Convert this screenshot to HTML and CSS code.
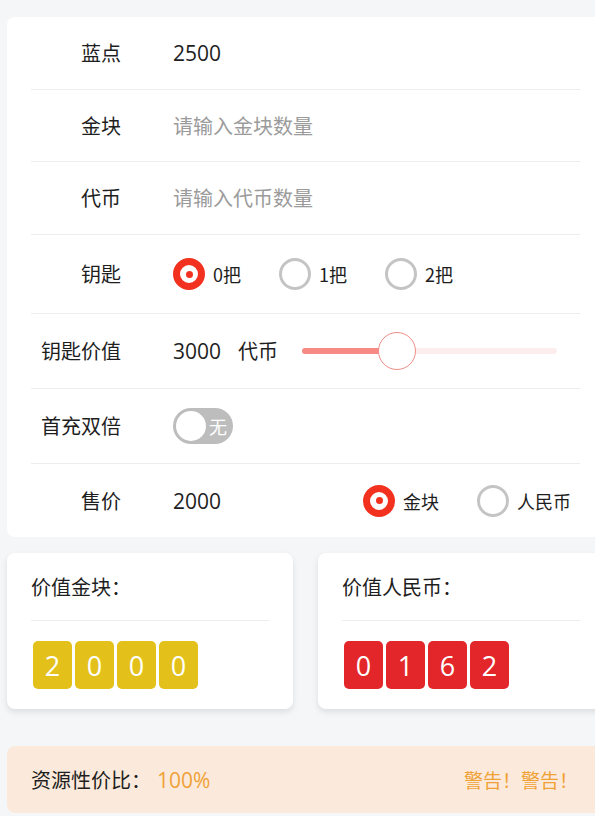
FILE: index.html
```html
<!DOCTYPE html>
<html lang="zh-CN">
<head>
<meta charset="utf-8">
<link rel="stylesheet" href="styles.css">
</head>
<body>
<div class="page">
  <div class="form-card">
    <div class="row r1">
      <div class="label">蓝点</div>
      <div class="value num">2500</div>
    </div>
    <div class="row r2">
      <div class="label">金块</div>
      <div class="value placeholder">请输入金块数量</div>
    </div>
    <div class="row r3">
      <div class="label">代币</div>
      <div class="value placeholder">请输入代币数量</div>
    </div>
    <div class="row r4">
      <div class="label">钥匙</div>
      <div class="value radios">
        <div class="radio"><span class="dot on"><span class="inner"></span></span><span class="rtext">0把</span></div>
        <div class="radio"><span class="dot"></span><span class="rtext">1把</span></div>
        <div class="radio"><span class="dot"></span><span class="rtext">2把</span></div>
      </div>
    </div>
    <div class="row r5">
      <div class="label">钥匙价值</div>
      <div class="value slider-wrap">
        <span class="num">3000</span>
        <span class="unit">代币</span>
        <div class="slider">
          <div class="fill"></div>
          <div class="thumb"></div>
        </div>
      </div>
    </div>
    <div class="row r6">
      <div class="label">首充双倍</div>
      <div class="value">
        <div class="switch"><span class="knob"></span><span class="stext">无</span></div>
      </div>
    </div>
    <div class="row r7">
      <div class="label">售价</div>
      <div class="value num">2000</div>
      <div class="radios sale">
        <div class="radio"><span class="dot on"><span class="inner"></span></span><span class="rtext">金块</span></div>
        <div class="radio"><span class="dot"></span><span class="rtext">人民币</span></div>
      </div>
    </div>
  </div>

  <div class="stats">
    <div class="stat-card">
      <div class="stat-title">价值金块：</div>
      <div class="digits gold">
        <span>2</span><span>0</span><span>0</span><span>0</span>
      </div>
    </div>
    <div class="stat-card">
      <div class="stat-title">价值人民币：</div>
      <div class="digits red">
        <span>0</span><span>1</span><span>6</span><span>2</span>
      </div>
    </div>
  </div>

  <div class="warn">
    <div class="warn-left">资源性价比：<span class="pct">100%</span></div>
    <div class="warn-right">警告！警告！</div>
  </div>
</div>
</body>
</html>
```

FILE: styles.css
```css
html, body {
  margin: 0;
  padding: 0;
}
body {
  background: #f5f6f8;
  overflow: hidden;
  font-family: "Noto Sans CJK SC", "Noto Sans", sans-serif;
  color: #1e1e1e;
}
.page {
  width: 597px;
  padding: 17px 0 0 7px;
}
.form-card {
  background: #fff;
  border-radius: 8px;
  padding: 0 24px;
}
.row {
  display: flex;
  align-items: center;
  border-bottom: 1px solid #ededed;
  box-sizing: border-box;
}
.r1 { height: 73px; }
.r2 { height: 72px; }
.r3 { height: 73px; }
.r4 { height: 79px; }
.r5 { height: 75px; }
.r6 { height: 75px; }
.r7 { height: 73px; border-bottom: none; }
.label {
  width: 90px;
  text-align: right;
  font-size: 20px;
  line-height: 28px;
  flex-shrink: 0;
}
.value {
  margin-left: 52px;
  font-size: 20px;
  line-height: 28px;
  display: flex;
  align-items: center;
}
.num {
  font-family: "Open Sans", "Noto Sans CJK SC", sans-serif;
  font-size: 21px;
}
.placeholder {
  color: #9b9b9b;
}
.radios {
  display: flex;
  align-items: center;
  gap: 38px;
}
.radio {
  display: flex;
  align-items: center;
  gap: 8px;
}
.dot {
  width: 32px;
  height: 32px;
  box-sizing: border-box;
  border-radius: 50%;
  border: 3px solid #c4c4c4;
  display: flex;
  align-items: center;
  justify-content: center;
}
.dot.on {
  border: 7px solid #f2321f;
  background: #fff;
}
.dot.on .inner {
  width: 7px;
  height: 7px;
  border-radius: 50%;
  background: #f2321f;
}
.rtext {
  font-size: 18px;
  line-height: 24px;
}
.sale {
  margin-left: auto;
  margin-right: 9px;
}
.slider-wrap .num {
  width: 48px;
}
.unit {
  margin-left: 17px;
}
.slider {
  position: relative;
  margin-left: 24px;
  width: 255px;
  height: 6px;
  border-radius: 3px;
  background: #fdeeee;
}
.fill {
  width: 80px;
  height: 6px;
  border-radius: 3px;
  background: #f78a84;
}
.thumb {
  position: absolute;
  left: 76px;
  top: -16px;
  width: 38px;
  height: 38px;
  box-sizing: border-box;
  border-radius: 50%;
  background: #fff;
  border: 1px solid #ef8d88;
}
.switch {
  width: 60px;
  height: 36px;
  border-radius: 18px;
  background: #bdbdbd;
  display: flex;
  align-items: center;
  padding: 0 4px 0 3px;
  box-sizing: border-box;
}
.knob {
  width: 30px;
  height: 30px;
  border-radius: 50%;
  background: #fff;
}
.stext {
  color: #fff;
  font-size: 18px;
  margin-left: 3px;
}
.stats {
  display: grid;
  grid-template-columns: 286px 286px;
  gap: 25px;
  margin-top: 16px;
}
.stat-card {
  background: #fff;
  border-radius: 8px;
  padding: 0 24px 20px;
  box-shadow: 0 3px 6px rgba(0, 0, 0, 0.10);
}
.stat-title {
  font-size: 20px;
  line-height: 28px;
  padding: 20px 0 19px;
  border-bottom: 1px solid #ededed;
}
.digits {
  display: flex;
  gap: 3px;
  margin-top: 20px;
  margin-left: 2px;
}
.digits span {
  width: 39px;
  height: 48px;
  border-radius: 5px;
  color: #fff;
  font-family: "Open Sans", "Noto Sans", sans-serif;
  font-size: 27px;
  display: flex;
  align-items: center;
  justify-content: center;
}
.gold span { background: #e3c11a; }
.red span { background: #e2262a; }
.warn {
  margin-top: 37px;
  height: 67px;
  background: #fbeadb;
  border-radius: 8px;
  display: flex;
  align-items: center;
  justify-content: space-between;
  padding: 0 26px 0 24px;
  font-size: 20px;
}
.pct {
  color: #f0a136;
  margin-left: 6px;
  font-family: "Open Sans", "Noto Sans CJK SC", sans-serif;
  font-size: 21px;
}
.warn-right {
  color: #f0a136;
  font-size: 19px;
}
```
